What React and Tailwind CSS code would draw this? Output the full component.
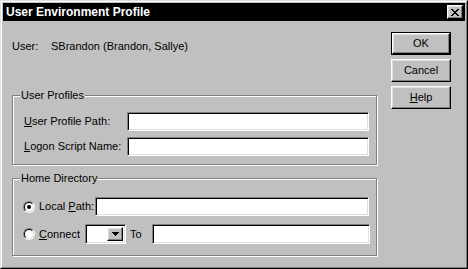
const raised =
  "border border-t-white border-l-white border-r-black border-b-black shadow-[inset_-1px_-1px_0_#808080,inset_1px_1px_0_#dfdfdf]";
const sunken =
  "border border-t-[#808080] border-l-[#808080] border-r-white border-b-white shadow-[inset_1px_1px_0_#000,inset_-1px_-1px_0_#dfdfdf] bg-white";

function Field({ className = "" }) {
  return <div className={`${sunken} h-[19px] ${className}`} />;
}

function Radio({ checked }) {
  return (
    <div className="w-3 h-3 rounded-full border border-t-[#808080] border-l-[#808080] border-r-white border-b-white">
      <div className="w-full h-full rounded-full border border-t-black border-l-black border-r-[#dfdfdf] border-b-[#dfdfdf] bg-white flex items-center justify-center">
        {checked && <div className="w-1 h-1 rounded-full bg-black" />}
      </div>
    </div>
  );
}

function Button({ children, isDefault }) {
  const face = (
    <div
      className={`${raised} h-full w-full flex items-center justify-center`}
    >
      {children}
    </div>
  );
  return (
    <div
      className={`w-[60px] h-[23px] ${isDefault ? "border border-black" : ""}`}
    >
      {face}
    </div>
  );
}

function Group({ label, className = "", children }) {
  return (
    <div
      className={`relative border border-[#808080] shadow-[1px_1px_0_#fff,inset_1px_1px_0_#fff] w-[365px] ${className}`}
    >
      <span className="absolute left-[7px] -top-[7px] bg-[#c0c0c0] px-px leading-[13px]">
        {label}
      </span>
      {children}
    </div>
  );
}

export default function App() {
  return (
    <div
      className="w-[468px] h-[269px] bg-[#c0c0c0] border border-t-[#dfdfdf] border-l-[#dfdfdf] border-r-black border-b-black text-[11px] text-black"
      style={{ fontFamily: '"Liberation Sans", Arial, sans-serif' }}
    >
      <div className="h-full border border-t-white border-l-white border-r-[#808080] border-b-[#808080] p-px flex flex-col">
        {/* title bar */}
        <div className="h-[18px] bg-black flex items-center justify-between pl-[3px] pr-[2px] shrink-0">
          <span className="text-white font-bold text-[12px] leading-none">
            User Environment Profile
          </span>
          <div className={`${raised} w-4 h-[14px] bg-[#c0c0c0] flex items-center justify-center`}>
            <svg width="8" height="7" viewBox="0 0 8 7" shapeRendering="crispEdges">
              <path
                d="M0 0h2v1h-2zM6 0h2v1h-2zM1 1h2v1h-2zM5 1h2v1h-2zM2 2h4v1h-4zM3 3h2v1h-2zM2 4h4v1h-4zM1 5h2v1h-2zM5 5h2v1h-2zM0 6h2v1h-2zM6 6h2v1h-2z"
                fill="#000"
              />
            </svg>
          </div>
        </div>

        <div className="flex pl-[9px]">
          {/* left column */}
          <div className="w-[366px]">
            <div className="flex mt-[19px] leading-[13px] h-[13px]">
              <span className="w-[39px]">User:</span>
              <span>SBrandon (Brandon, Sallye)</span>
            </div>

            <Group label="User Profiles" className="mt-[42px] h-[70px] pt-[16px]">
              <div className="flex items-center pl-[11px]">
                <span className="w-[103px]">
                  <u>U</u>ser Profile Path:
                </span>
                <Field className="w-[242px]" />
              </div>
              <div className="flex items-center pl-[11px] mt-[6px]">
                <span className="w-[103px]">
                  <u>L</u>ogon Script Name:
                </span>
                <Field className="w-[242px]" />
              </div>
            </Group>

            <Group label="Home Directory" className="mt-[13px] h-[78px] pt-[18px]">
              <div className="flex items-center pl-[10px]">
                <Radio checked />
                <span className="ml-[4px] w-[56px]">
                  Local <u>P</u>ath:
                </span>
                <Field className="w-[274px]" />
              </div>
              <div className="flex items-center pl-[10px] mt-[8px]">
                <Radio />
                <span className="ml-[4px] w-[46px]">
                  <u>C</u>onnect
                </span>
                <div className={`${sunken} w-[41px] h-[20px] flex justify-end p-[2px]`}>
                  <div className={`${raised} bg-[#c0c0c0] w-4 h-full flex items-center justify-center`}>
                    <svg width="7" height="4" viewBox="0 0 7 4" shapeRendering="crispEdges">
                      <path d="M0 0h7v1h-7zM1 1h5v1h-5zM2 2h3v1h-3zM3 3h1v1h-1z" fill="#000" />
                    </svg>
                  </div>
                </div>
                <span className="ml-[4px] w-[22px]">To</span>
                <Field className="w-[218px] h-[20px]" />
              </div>
            </Group>
          </div>

          {/* buttons */}
          <div className="ml-[13px] mt-[11px] flex flex-col gap-1">
            <Button isDefault>OK</Button>
            <Button>Cancel</Button>
            <Button>
              <span>
                <u>H</u>elp
              </span>
            </Button>
          </div>
        </div>
      </div>
    </div>
  );
}
